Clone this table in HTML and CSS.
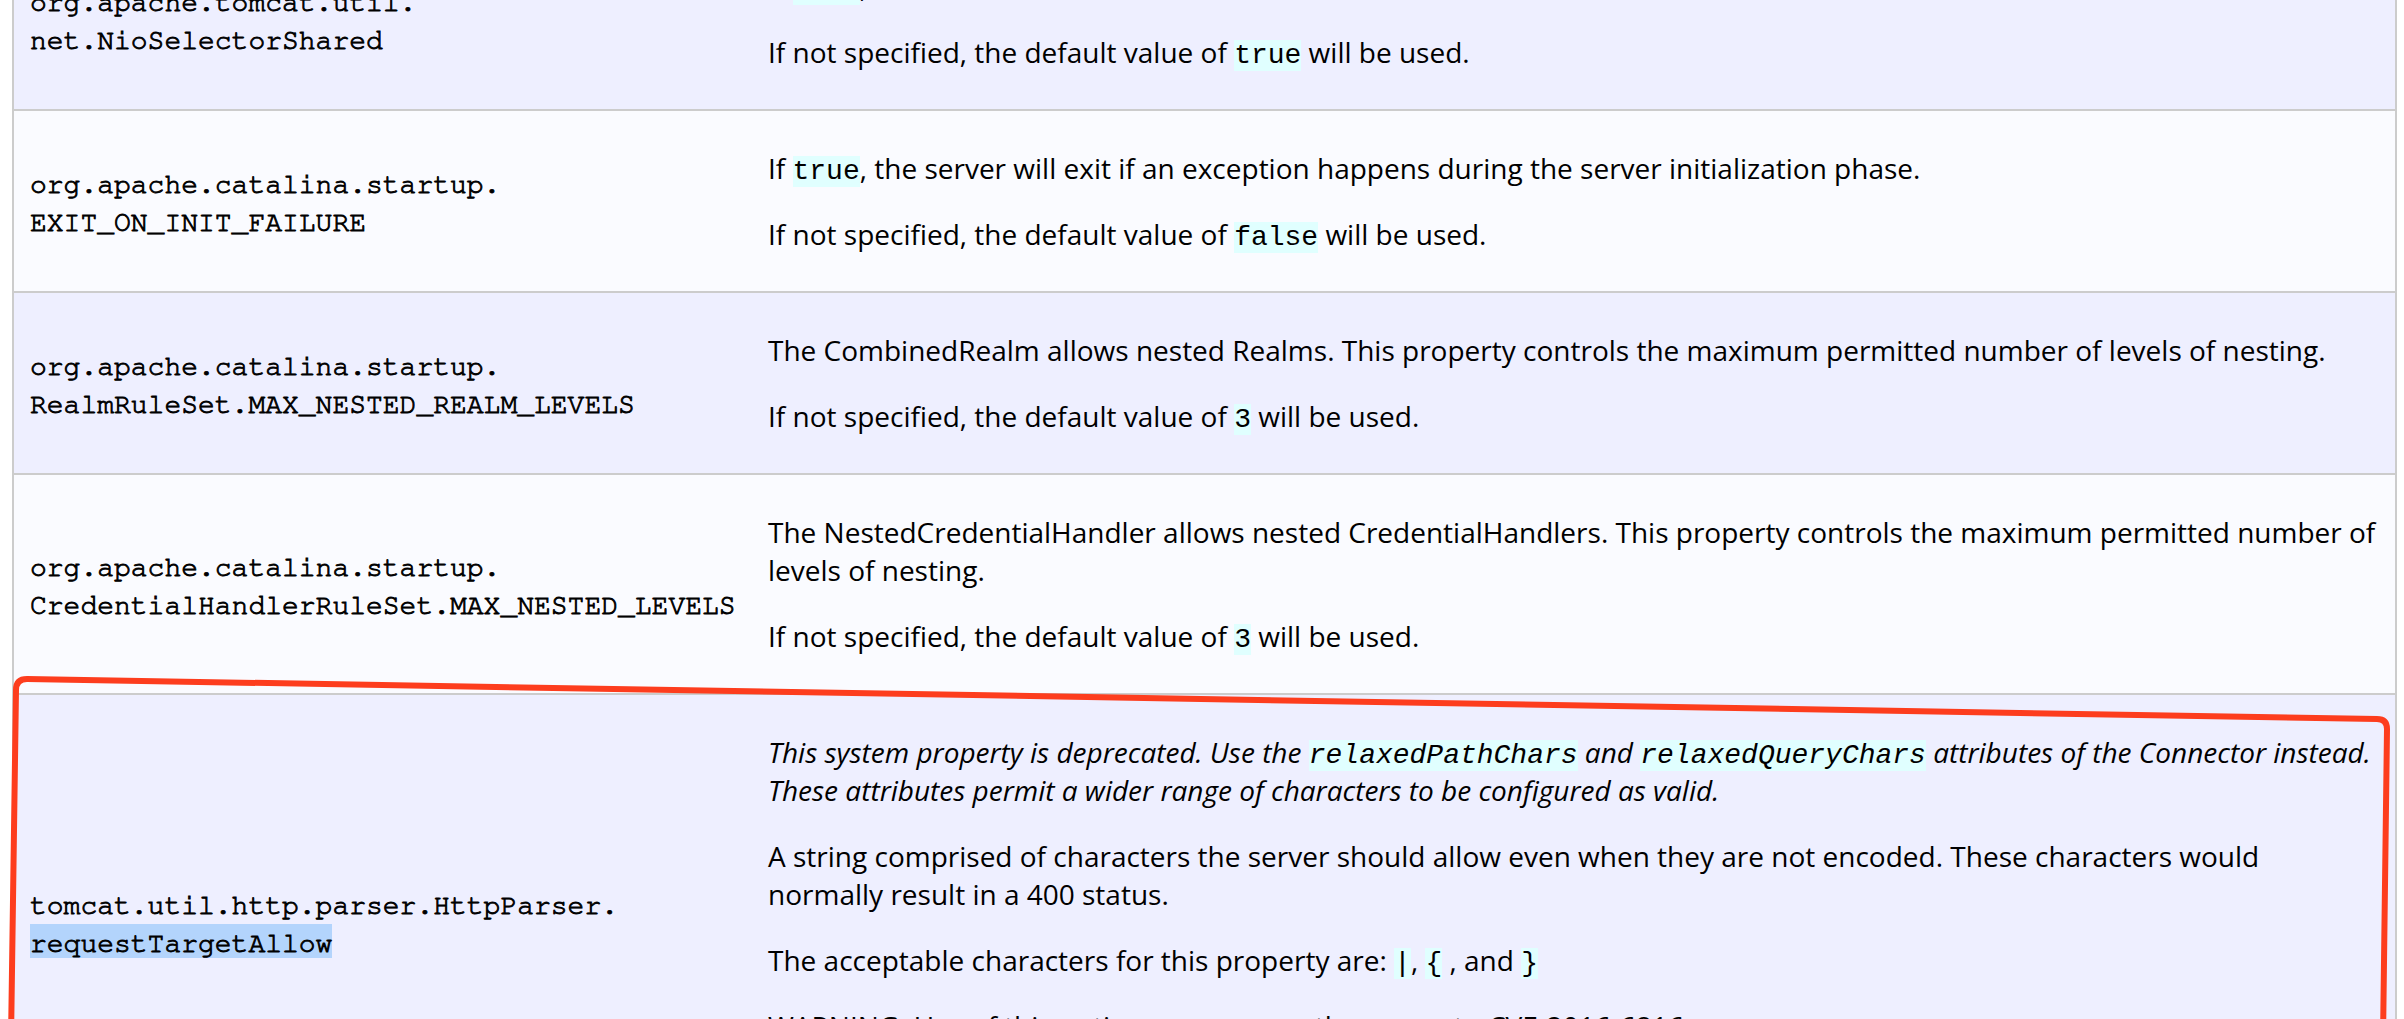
FILE: index.html
```html
<!DOCTYPE html>
<html lang="en">
<head>
<meta charset="utf-8">
<title>System Properties</title>
<link rel="stylesheet" href="styles.css">
</head>
<body>
<div class="page">
  <table class="detail-table">
    <tr>
      <td class="name"><code class="prop">org.apache.tomcat.util.<br>net.NioSelectorShared</code></td>
      <td class="desc">
        <p>If <code>true</code>, a shared selector will be used for the NIO connector.</p>
        <p>If not specified, the default value of <code>true</code> will be used.</p>
      </td>
    </tr>
    <tr>
      <td class="name"><code class="prop">org.apache.catalina.startup.<br>EXIT_ON_INIT_FAILURE</code></td>
      <td class="desc">
        <p>If <code>true</code>, the server will exit if an exception happens during the server initialization phase.</p>
        <p>If not specified, the default value of <code>false</code> will be used.</p>
      </td>
    </tr>
    <tr>
      <td class="name"><code class="prop">org.apache.catalina.startup.<br>RealmRuleSet.MAX_NESTED_REALM_LEVELS</code></td>
      <td class="desc">
        <p>The CombinedRealm allows nested Realms. This property controls the maximum permitted number of levels of nesting.</p>
        <p>If not specified, the default value of <code>3</code> will be used.</p>
      </td>
    </tr>
    <tr>
      <td class="name"><code class="prop">org.apache.catalina.startup.<br>CredentialHandlerRuleSet.MAX_NESTED_LEVELS</code></td>
      <td class="desc">
        <p>The NestedCredentialHandler allows nested CredentialHandlers. This property controls the maximum permitted number of levels of nesting.</p>
        <p>If not specified, the default value of <code>3</code> will be used.</p>
      </td>
    </tr>
    <tr>
      <td class="name"><code class="prop">tomcat.util.http.parser.HttpParser.<br><span class="selected">requestTargetAllow</span></code></td>
      <td class="desc">
        <p><em>This system property is deprecated. Use the <code>relaxedPathChars</code> and <code>relaxedQueryChars</code> attributes of the Connector instead. These attributes permit a wider range of characters to be configured as valid.</em></p>
        <p>A string comprised of characters the server should allow even when they are not encoded. These characters would normally result in a 400 status.</p>
        <p>The acceptable characters for this property are: <code>|</code>, <code>{</code> , and <code>}</code></p>
        <p>WARNING: Use of this option may expose the server to CVE-2016-6816.</p>
        <p>If not specified, no additional characters will be allowed.</p>
      </td>
    </tr>
  </table>
  <svg class="annotation" width="2404" height="1019" viewBox="0 0 2404 1019" aria-hidden="true">
    <path d="M 11 1040 L 16 690 Q 16 679 27 679 L 2377 719 Q 2387 719 2387 729 L 2383 1040"
          fill="none" stroke="#fd3d1e" stroke-width="6" stroke-linejoin="round" stroke-linecap="round"/>
  </svg>
</div>
</body>
</html>
```

FILE: styles.css
```css
html, body {
  margin: 0;
  padding: 0;
  background: #ffffff;
}

body {
  font-family: "Open Sans", "Noto Sans", sans-serif;
  font-size: 28px;
  color: #000000;
  overflow: hidden;
}

.page {
  position: relative;
  height: 1019px;
  overflow: hidden;
  padding-left: 12px;
}

.detail-table {
  border-collapse: separate;
  border-spacing: 0;
  table-layout: fixed;
  width: 2385px;
  margin-top: -71px;
}

.detail-table tr:nth-child(odd) {
  background-color: #eeefff;
}

.detail-table tr:nth-child(even) {
  background-color: #fafbff;
}

.detail-table td {
  padding: 10px 16px;
  vertical-align: middle;
  border-bottom: 2px solid #cccccc;
}

.detail-table td.name {
  width: 706px;
  border-left: 2px solid #cccccc;
}

.detail-table td.desc {
  border-right: 2px solid #cccccc;
}

.detail-table p {
  margin: 28px 0;
}

code {
  font-family: "Liberation Mono", "DejaVu Sans Mono", monospace;
  font-size: inherit;
  background-color: #e0ffff;
  color: #000000;
}

code.prop {
  font-family: "Nimbus Mono PS", "Nimbus Mono L", "FreeMono", "Liberation Mono", "Courier New", monospace;
  background: none;
  -webkit-text-stroke: 0.9px #000000;
}

.selected {
  background-color: #b3d4fc;
  padding-top: 6px;
}

.annotation {
  position: absolute;
  top: 0;
  left: 0;
  pointer-events: none;
}
```
